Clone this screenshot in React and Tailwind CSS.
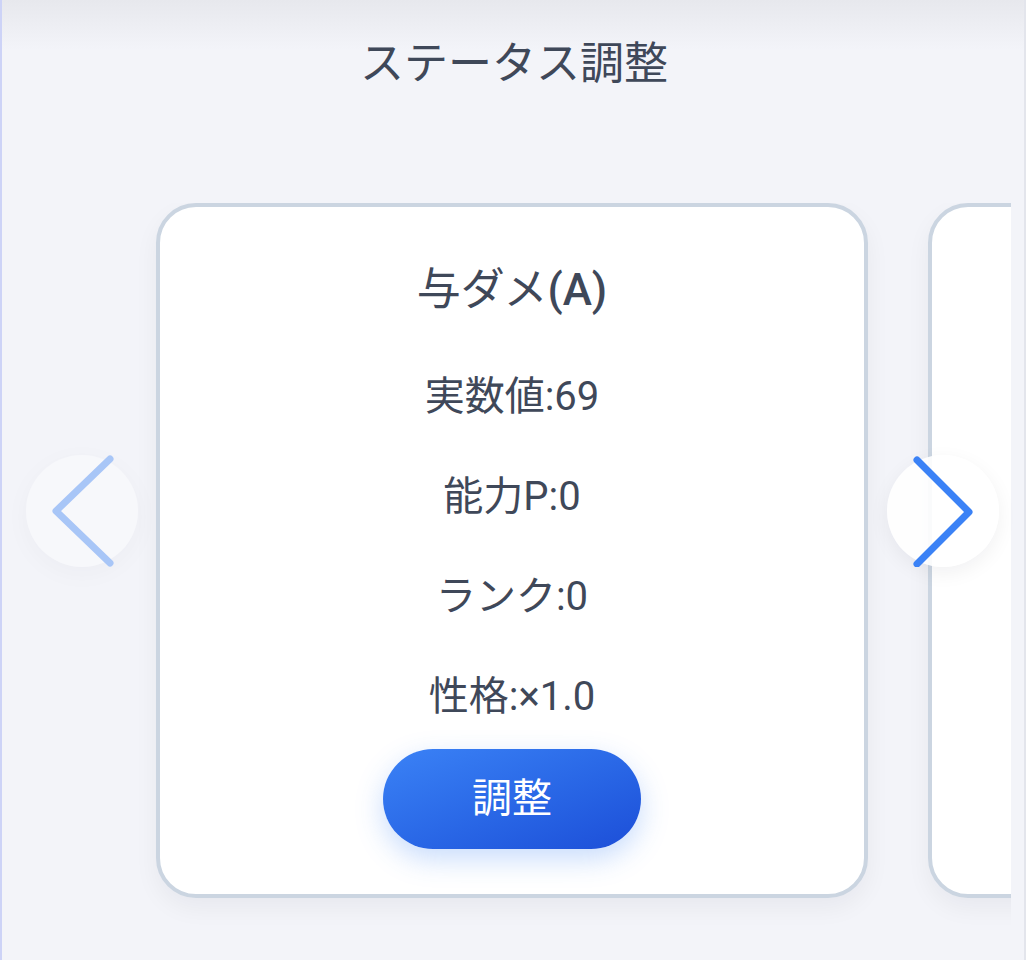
import React from "react";

const stats = ["実数値:69", "能力P:0", "ランク:0", "性格:×1.0"];

function Card({ title, empty }) {
  return (
    <div className="shrink-0 w-[712px] h-[695px] rounded-[40px] border-4 border-[#cbd5e1] bg-white shadow-[0_10px_24px_rgba(15,23,42,0.05)] flex flex-col items-center pt-[55px]">
      {!empty && (
        <>
          <div className="text-[44px] leading-[56px] font-normal text-[#3f4859]">
            与ダメ<span className="font-medium">(A)</span>
          </div>
          <div className="mt-[29px] flex flex-col items-center">
            {stats.map((s) => (
              <div key={s} className="h-[100px] leading-[100px] text-[40px] text-[#3f4859]">
                {s}
              </div>
            ))}
          </div>
          <button className="mt-[2px] w-[258px] h-[100px] rounded-full bg-linear-to-br from-[#3b82f6] to-[#1d4ed8] text-white text-[40px] leading-none shadow-[0_10px_28px_rgba(59,130,246,0.28)]">
            調整
          </button>
        </>
      )}
    </div>
  );
}

export default function App() {
  return (
    <div
      className="relative w-[1026px] h-[960px] overflow-hidden bg-[#f3f4f9] border-l-2 border-[#cdd3f7]"
      style={{ fontFamily: 'Roboto, "Noto Sans CJK JP", sans-serif' }}
    >
      <div className="absolute inset-x-0 top-0 h-[50px] bg-linear-to-b from-[#e7e8ed] to-[#f3f4f9]/0 pointer-events-none" />
      <div className="absolute right-0 top-0 bottom-0 w-[2px] bg-[#e3e5ec]" />
      <div className="relative pt-[32px]">
        <h1 className="text-center text-[44px] leading-[64px] font-normal text-[#3f4859]">ステータス調整</h1>
      </div>
      <div className="relative mt-[107px] ml-[13px] w-[996px]">
        <div className="overflow-hidden pb-[40px]">
          <div className="flex gap-[60px] pl-[141px]">
            <Card />
            <Card empty />
          </div>
        </div>
        <button className="absolute left-[11px] top-[252px] w-[112px] h-[112px] rounded-full bg-white/90 shadow-[0_6px_20px_rgba(15,23,42,0.06)] opacity-40">
          <svg width="112" height="112" viewBox="0 0 112 112" className="absolute inset-0">
            <path d="M84 4 L30 56 L84 108" fill="none" stroke="#3b82f6" strokeWidth="7" strokeLinecap="round" strokeLinejoin="round" />
          </svg>
        </button>
        <button className="absolute left-[872px] top-[252px] w-[112px] h-[112px] rounded-full bg-white/90 shadow-[0_6px_20px_rgba(15,23,42,0.06)]">
          <svg width="112" height="112" viewBox="0 0 112 112" className="absolute inset-0">
            <path d="M30 5 L82 57 L30 109" fill="none" stroke="#3b82f6" strokeWidth="7" strokeLinecap="round" strokeLinejoin="round" />
          </svg>
        </button>
      </div>
    </div>
  );
}
